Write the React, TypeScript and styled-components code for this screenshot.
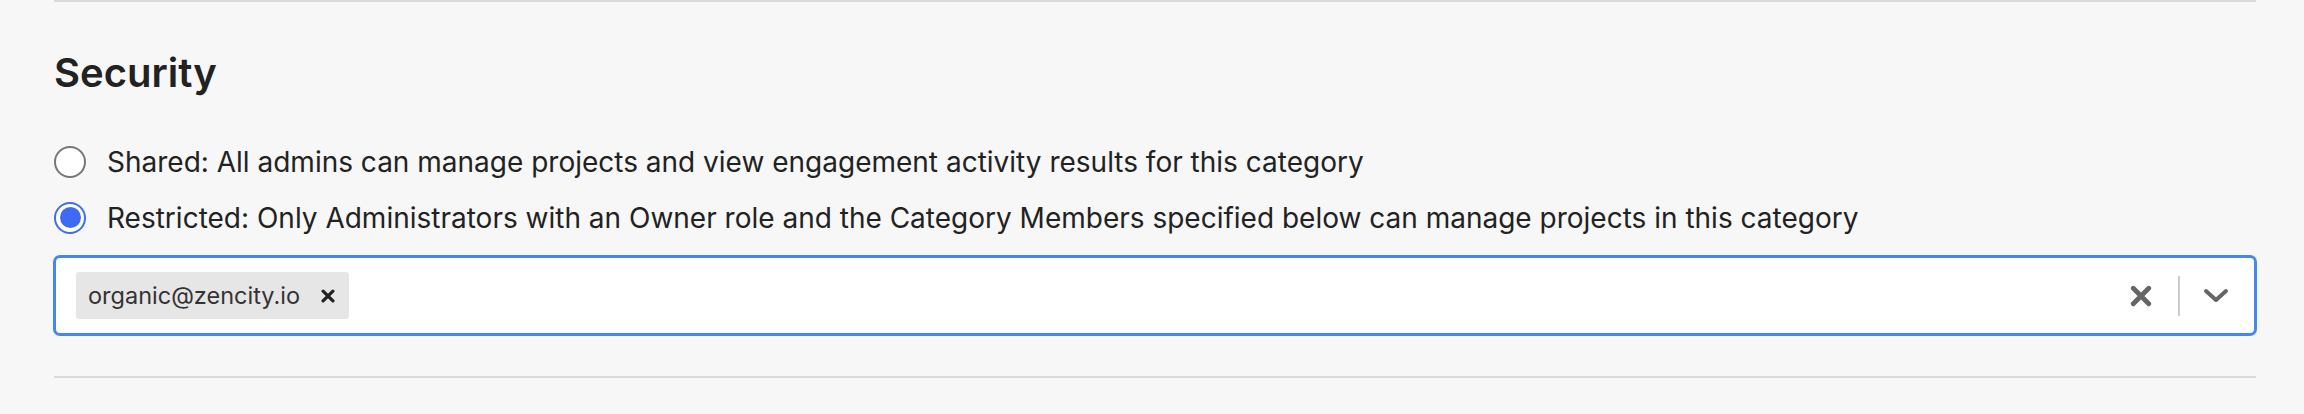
import React from 'react';
import styled, { createGlobalStyle } from 'styled-components';

const GlobalStyle = createGlobalStyle`
	html, body {
		margin: 0;
		padding: 0;
		background: #f7f7f7;
		font-family: Inter, 'Noto Sans', sans-serif;
		color: #222222;
	}
`;

const Page = styled.div`
	width: 2202px;
	padding-left: 54px;
`;

const Divider = styled.div`
	height: 2px;
	background: #dadada;
`;

const Section = styled.section`
	padding: 48px 0 41px;
`;

const Heading = styled.h2`
	margin: 0 0 49px;
	font-size: 40px;
	font-weight: 600;
	line-height: 46px;
	color: #222222;
`;

const RadioGroup = styled.div`
	display: flex;
	flex-direction: column;
	gap: 23px;
	margin-bottom: 22px;
`;

const RadioRow = styled.label`
	display: flex;
	align-items: center;
	gap: 21px;
	height: 33px;
	font-size: 28px;
	cursor: pointer;
`;

const RadioCircle = styled.span<{ $checked: boolean }>`
	flex: none;
	box-sizing: border-box;
	width: 32px;
	height: 32px;
	border-radius: 50%;
	border: 2.5px solid ${(p) => (p.$checked ? '#3e6bf3' : '#767676')};
	background: #ffffff;
	display: flex;
	align-items: center;
	justify-content: center;

	&::after {
		content: '';
		display: ${(p) => (p.$checked ? 'block' : 'none')};
		width: 21px;
		height: 21px;
		border-radius: 50%;
		background: #3e6bf3;
	}
`;

const SelectControl = styled.div`
	box-sizing: border-box;
	height: 79px;
	border: 2px solid #4686f2;
	box-shadow: 0 0 0 1px #4686f2;
	border-radius: 6px;
	background: #ffffff;
	display: flex;
	align-items: center;
	padding: 0 20px 0 20px;
`;

const ValueContainer = styled.div`
	flex: 1;
	display: flex;
	align-items: center;
	gap: 6px;
`;

const Chip = styled.div`
	display: flex;
	align-items: center;
	height: 47px;
	padding: 0 14px 0 12px;
	background: #e6e6e6;
	border-radius: 3px;
	font-size: 23.5px;
	color: #333333;
`;

const ChipRemove = styled.span`
	display: flex;
	margin-left: 21px;
	color: #222222;
`;

const Indicators = styled.div`
	display: flex;
	align-items: center;
	color: #666666;
`;

const IndicatorButton = styled.span`
	display: flex;
	align-items: center;
	justify-content: center;
	width: 36px;
	height: 36px;
`;

const Separator = styled.span`
	width: 2px;
	height: 40px;
	background: #cccccc;
	margin: 0 18px 0 19px;
`;

const Cross = ({ size, stroke }: { size: number; stroke: number }) => (
	<svg width={size} height={size} viewBox="0 0 20 20" fill="none">
		<path
			d="M3 3L17 17M17 3L3 17"
			stroke="currentColor"
			strokeWidth={stroke}
			strokeLinecap="round"
		/>
	</svg>
);

const Chevron = () => (
	<svg width="26" height="16" viewBox="0 0 26 16" fill="none">
		<path
			d="M3 3L13 12L23 3"
			stroke="currentColor"
			strokeWidth="4"
			strokeLinecap="round"
			strokeLinejoin="round"
		/>
	</svg>
);

const options = [
	{
		id: 'shared',
		label:
			'Shared: All admins can manage projects and view engagement activity results for this category',
	},
	{
		id: 'restricted',
		label:
			'Restricted: Only Administrators with an Owner role and the Category Members specified below can manage projects in this category',
	},
];

const App = () => {
	const [security, setSecurity] = React.useState<string>('restricted');
	const [members, setMembers] = React.useState<string[]>(['organic@zencity.io']);

	return (
		<Page>
			<GlobalStyle />
			<Divider />
			<Section>
				<Heading>Security</Heading>
				<RadioGroup>
					{options.map((option) => (
						<RadioRow key={option.id} onClick={() => setSecurity(option.id)}>
							<RadioCircle $checked={security === option.id} />
							{option.label}
						</RadioRow>
					))}
				</RadioGroup>
				{security === 'restricted' && (
					<SelectControl>
						<ValueContainer>
							{members.map((member) => (
								<Chip key={member}>
									{member}
									<ChipRemove
										onClick={() =>
											setMembers(members.filter((each) => each !== member))
										}
									>
										<Cross size={14} stroke={4.6} />
									</ChipRemove>
								</Chip>
							))}
						</ValueContainer>
						<Indicators>
							<IndicatorButton onClick={() => setMembers([])}>
								<Cross size={22} stroke={4.4} />
							</IndicatorButton>
							<Separator />
							<IndicatorButton>
								<Chevron />
							</IndicatorButton>
						</Indicators>
					</SelectControl>
				)}
			</Section>
			<Divider />
		</Page>
	);
};

export default App;
